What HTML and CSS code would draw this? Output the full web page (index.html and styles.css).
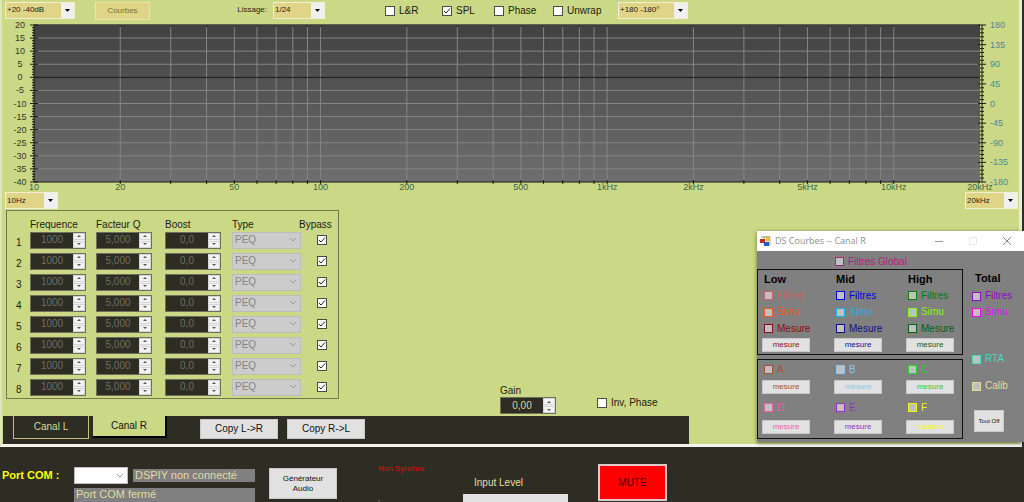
FILE: index.html
```html
<!DOCTYPE html>
<html lang="fr">
<head>
<meta charset="utf-8">
<meta name="viewport" content="width=device-width, initial-scale=1">
<title>DSPIY</title>
<link rel="stylesheet" href="styles.css">
</head>
<body>
<main class="workspace">
  <div class="toolbar">
    <select class="combo combo-wide" aria-label="Plage SPL"><option>+20 -40dB</option></select>
    <button class="curves-btn" type="button">Courbes</button>
    <label class="smoothing">Lissage:
      <select class="combo combo-mid"><option>1/24</option></select>
    </label>
    <div class="view-options">
      <label class="check opt-lr"><input type="checkbox">L&amp;R</label>
      <label class="check opt-spl"><input type="checkbox" checked>SPL</label>
      <label class="check opt-phase"><input type="checkbox">Phase</label>
      <label class="check opt-unwrap"><input type="checkbox">Unwrap</label>
    </div>
    <select class="combo combo-wide" aria-label="Plage phase"><option>+180 -180°</option></select>
  </div>

  <div class="chart"><svg id="plot" class="plot" role="img" aria-label="Réponse en fréquence"></svg></div>

  <div class="range">
    <select class="combo" aria-label="Fréquence min"><option>10Hz</option></select>
    <select class="combo" aria-label="Fréquence max"><option>20kHz</option></select>
  </div>

  <div class="channel">
    <section class="eq" id="eq">
      <div class="eq-row eq-head"><span></span><span>Frequence</span><span>Facteur Q</span><span>Boost</span><span>Type</span><span class="bypass-title">Bypass</span></div>
    </section>
    <div class="output">
      <div class="gain">
        <label for="gain">Gain</label>
        <div class="spin spin-live"><input id="gain" type="text" value="0,00"><div class="steps"><button type="button" class="up" aria-label="Plus"></button><button type="button" class="down" aria-label="Moins"></button></div></div>
      </div>
      <label class="check invert"><input type="checkbox">Inv, Phase</label>
    </div>
  </div>

  <div class="tabs">
    <button type="button" class="tab">Canal L</button>
    <button type="button" class="tab tab-active">Canal R</button>
    <button type="button" class="plain copy">Copy L-&gt;R</button>
    <button type="button" class="plain copy">Copy R-&gt;L</button>
  </div>
</main>

<footer class="footer">
  <label class="port-label" for="port">Port COM :</label>
  <div class="port">
    <select id="port" class="port-select"><option></option></select>
    <output class="status">DSPIY non connecté</output>
    <output class="status status-full">Port COM fermé</output>
  </div>
  <button type="button" class="plain generator">Générateur<br>Audio</button>
  <div class="sync"><span>Non Synchro</span><span class="dot">.</span></div>
  <div class="level"><span>Input Level</span><div class="level-bar"></div></div>
  <button type="button" class="mute">MUTE</button>
</footer>

<aside class="window">
  <header class="titlebar">
    <svg class="app-icon" viewBox="0 0 11 11" aria-hidden="true">
      <rect x="1" y="0" width="9" height="2" fill="#c9c9c9"/><rect x="4" y="1" width="6" height="8" fill="#e4e4e4" stroke="#888" stroke-width=".6"/>
      <rect x="0" y="3" width="5" height="4" fill="#c82c22"/><rect x="6" y="1" width="4" height="4" fill="#f0bd28"/><rect x="4" y="6" width="5" height="4" fill="#245fc4"/>
    </svg>
    <span class="title">DS Courbes -- Canal R</span>
    <button type="button" aria-label="Réduire"><svg viewBox="0 0 10 10"><path d="M1 5.500h8" stroke="#999"/></svg></button>
    <button type="button" aria-label="Agrandir"><svg viewBox="0 0 10 10"><path d="M1.500 1.500h7v7h-7z" stroke="#e6e6e6"/></svg></button>
    <button type="button" aria-label="Fermer"><svg viewBox="0 0 10 10"><path d="M1 1l8 8M9 1l-8 8" stroke="#888"/></svg></button>
  </header>
  <div class="window-body">
    <label class="check tint global magenta"><input type="checkbox">Filtres Global</label>
    <div class="groups">
      <div class="group bands">
        <h2>Low</h2><h2>Mid</h2><h2>High</h2>
        <label class="check tint coral"><input type="checkbox">Filtres</label>
        <label class="check tint blue"><input type="checkbox">Filtres</label>
        <label class="check tint green"><input type="checkbox">Filtres</label>
        <label class="check tint orange"><input type="checkbox">Simu</label>
        <label class="check tint cyan"><input type="checkbox">Simu</label>
        <label class="check tint lawn"><input type="checkbox">Simu</label>
        <label class="check tint maroon"><input type="checkbox">Mesure</label>
        <label class="check tint navy"><input type="checkbox">Mesure</label>
        <label class="check tint forest"><input type="checkbox">Mesure</label>
        <button type="button" class="plain measure maroon">mesure</button>
        <button type="button" class="plain measure navy">mesure</button>
        <button type="button" class="plain measure forest">mesure</button>
      </div>
      <div class="group slots">
        <label class="check tint sienna"><input type="checkbox">A</label>
        <label class="check tint sky"><input type="checkbox">B</label>
        <label class="check tint lime"><input type="checkbox">C</label>
        <button type="button" class="plain measure sienna">mesure</button>
        <button type="button" class="plain measure sky">mesure</button>
        <button type="button" class="plain measure lime">mesure</button>
        <label class="check tint pink"><input type="checkbox">D</label>
        <label class="check tint purple"><input type="checkbox">E</label>
        <label class="check tint yellow"><input type="checkbox">F</label>
        <button type="button" class="plain measure pink">mesure</button>
        <button type="button" class="plain measure purple">mesure</button>
        <button type="button" class="plain measure yellow">mesure</button>
      </div>
    </div>
    <div class="totals">
      <h2>Total</h2>
      <label class="check tint violet"><input type="checkbox">Filtres</label>
      <label class="check tint fuchsia"><input type="checkbox">Simu</label>
      <label class="check tint turquoise rta"><input type="checkbox">RTA</label>
      <label class="check tint khaki calib"><input type="checkbox">Calib</label>
      <button type="button" class="plain all-off">Tout Off</button>
    </div>
  </div>
</aside>
<script src="app.js"></script>
</body>
</html>
```
FILE: styles.css
```css
:root {
  --lime: #cbd885;
  --dark: #2d2d23;
  --sand: #e0d486;
  --face: #e1e1e1;
}
* { box-sizing: border-box; }
body {
  margin: 0;
  min-height: 100vh;
  position: relative;
  overflow: hidden;
  display: flex;
  flex-direction: column;
  background: var(--dark);
  color: #1c1c14;
  font: 10px/12px "Liberation Sans", Arial, sans-serif;
}
button, input, select { font: inherit; color: inherit; margin: 0; padding: 0; border-radius: 0; }
h2 { margin: 0; font-size: 11px; line-height: 12px; color: #000; }

.workspace {
  margin-right: 2px;
  border-right: 3px solid #e9ebe2;
  border-bottom: 3px solid #f4f5ee;
  border-left: 2px solid #dfe5bd;
  background: var(--lime);
}

/* shared controls */
.combo {
  appearance: none;
  height: 17px;
  width: 53px;
  padding: 0 13px 0 1px;
  border: 1px solid #f3efd2;
  font-size: 8px;
  background:
    url("data:image/svg+xml,%3Csvg xmlns='http://www.w3.org/2000/svg' width='13' height='15'%3E%3Cpath d='M0 0h13v15H0z' fill='%23f0f0f0'/%3E%3Cpath d='M4 6h5L6.500 9z'/%3E%3C/svg%3E") right center no-repeat,
    var(--sand);
}
.combo-wide { width: 70px; }
.combo-mid { width: 52px; }
.plain { border: 1px solid #c9c9c9; background: var(--face); color: #111; }
.check { display: flex; align-items: center; gap: 4px; white-space: nowrap; }
.check input, .bypass {
  appearance: none;
  flex: none;
  width: 10px;
  height: 10px;
  border: 1px solid #4b4b43;
  background: #fff;
}
.check input:checked, .bypass:checked {
  background: #fff url("data:image/svg+xml,%3Csvg xmlns='http://www.w3.org/2000/svg' viewBox='0 0 8 8'%3E%3Cpath d='M1 4l2 2 4-4.500' fill='none' stroke='%23222'/%3E%3C/svg%3E");
}

.toolbar { display: flex; align-items: center; height: 25px; padding: 0 0 5px 3px; }
.curves-btn {
  width: 55px;
  height: 18px;
  margin: 2px 0 0 20px;
  border: 1px solid #efe5a8;
  background: var(--sand);
  color: #77713c;
  font-size: 8px;
}
.smoothing { display: flex; align-items: center; justify-content: flex-end; gap: 6px; width: 175px; font-size: 8px; }
.view-options { display: flex; margin: 2px 0 0 60px; }
.opt-lr { width: 57px; }
.opt-spl { width: 52px; }
.opt-phase { width: 59px; }
.opt-unwrap { width: 65px; }

.chart { height: 167px; padding: 0 39px 0 32px; }
.plot { display: block; width: 100%; height: 157px; overflow: visible; font-size: 9px; }
.plot .grid { stroke: #858585; }
.plot .axis { stroke: #1b1b18; }
.plot .y-label { fill: #333a24; text-anchor: middle; }
.plot .x-label { fill: #3d6546; text-anchor: middle; }
.plot .phase-label { fill: #4b889a; }

.range { display: flex; justify-content: space-between; padding: 0 1px 0 3px; }
.range .combo { margin-bottom: 1px; }

.channel { display: flex; padding-left: 4px; }
.eq { width: 333px; height: 189px; border: 1px solid #737a4e; padding-top: 8px; }
.eq-row {
  display: grid;
  grid-template-columns: 14px 66px 69px 67px 85px 1fr;
  align-items: center;
  height: 17px;
  margin-bottom: 4px;
  padding-left: 9px;
}
.eq-head { height: 12px; margin: 0; }
.eq-row .number { padding-top: 6px; }
.bypass-title { margin-left: -18px; }
.spin {
  display: flex;
  width: 56px;
  height: 17px;
  border: 1px solid #6d6f5c;
  background: var(--dark);
}
.spin input { width: 0; flex: 1; border: 0; background: none; color: #6e6e67; text-align: center; }
.spin-live input { color: #d9d49b; }
.steps { display: flex; flex-direction: column; width: 12px; background: #f0f0f0; gap: 1px; }
.steps button { flex: 1; border: 1px solid #d5d5d5; background: #f3f3f3; display: grid; place-items: center; min-height: 0; }
.steps button::before { content: ""; border: 2px solid transparent; }
.steps .up::before { border-top: 0; border-bottom-color: #555; }
.steps .down::before { border-bottom: 0; border-top-color: #555; }
.type, .port-select {
  appearance: none;
  width: 69px;
  height: 17px;
  padding-left: 2px;
  border: 1px solid #bcbcbc;
  color: #858585;
  opacity: 1;
  background: #ccc url("data:image/svg+xml,%3Csvg xmlns='http://www.w3.org/2000/svg' width='12' height='8'%3E%3Cpath d='M2 2l3 3 3-3' fill='none' stroke='%23999'/%3E%3C/svg%3E") right center no-repeat;
}
.output { display: flex; align-items: flex-start; gap: 41px; padding: 175px 0 0 161px; }
.gain { display: flex; flex-direction: column; }
.invert { margin-top: 12px; }

.tabs {
  display: flex;
  align-items: flex-start;
  width: 686px;
  max-width: 100%;
  height: 28px;
  margin: 2px 0 0 1px;
  padding-left: 10px;
  background: var(--dark);
}
.tab { width: 76px; height: 23px; border: 1px solid #c9bc7c; border-top: 0; background: none; color: #dcd69b; }
.tab-active { width: 74px; height: 22px; margin: 0 33px 0 4px; border: 0 solid #000; border-width: 0 2px 2px 0; background: var(--lime); color: #15150f; }
.copy { width: 78px; height: 20px; margin: 3px 9px 0 0; }

.footer { display: flex; align-items: flex-start; flex: 1; height: 55px; padding: 17px 0 0 2px; color: #e5dfa5; }
.port-label { width: 72px; margin-top: 5px; font-size: 11px; font-weight: bold; color: #ff0; }
.port { display: grid; grid-template-columns: 54px 122px; gap: 4px 5px; align-items: center; margin-top: 3px; font-size: 11px; }
.port-select { width: 54px; background-color: #fff; }
.status { display: block; height: 13px; padding-left: 2px; line-height: 13px; background: #808080; color: #e0d9a0; }
.status-full { grid-column: 1 / -1; height: 14px; }
.generator { width: 68px; height: 31px; margin: 4px 0 0 14px; font-size: 8px; line-height: 10px; }
.sync { display: flex; flex-direction: column; gap: 20px; width: 85px; margin: 0 0 0 41px; font-size: 8px; line-height: 10px; white-space: nowrap; color: #e00d0d; }
.dot { color: #e5dfa5; }
.level { width: 105px; margin-top: 13px; }
.level span { display: block; padding-left: 11px; }
.level-bar { height: 10px; margin-top: 5px; background: var(--face); }
.mute { width: 69px; height: 37px; margin-left: 30px; border: 2px solid #e3c9c9; background: #f00; color: #400; }

/* floating curve selector, over the workspace */
.window {
  position: absolute;
  top: 231px;
  right: 0;
  width: 267px;
  background: #808080;
  box-shadow: 0 1px 4px #0008;
}
.titlebar { display: flex; align-items: center; height: 20px; padding-left: 3px; background: #fff; font: 9px/12px "Open Sans", sans-serif; color: #8f8f8f; }
.app-icon { width: 11px; height: 11px; }
.title { flex: 1; margin-left: 4px; }
.titlebar button { width: 34px; height: 20px; border: 0; background: none; display: grid; place-items: center; }
.titlebar button svg { width: 10px; height: 10px; fill: none; }
.window-body { display: grid; grid-template-columns: 206px 1fr; padding-bottom: 3px; }
.global { grid-column: 1 / -1; height: 18px; padding: 3px 0 0 78px; }
.groups { display: grid; gap: 4px; }
.group {
  display: grid;
  grid-template-columns: 72px 72px 1fr;
  align-content: start;
  align-items: center;
  padding-left: 6px;
  border: 1px solid #111;
}
.bands { height: 86px; grid-template-rows: 17px 17px 16px 17px 15px; }
.slots { height: 80px; grid-template-rows: 19px 15px 27px 11px; }
.tint input { width: 9px; height: 9px; border-color: currentColor; background: #c0c0c0; }
.bands .measure, .slots .measure { width: 48px; height: 14px; margin-left: -2px; font-size: 8px; line-height: 10px; }
.measure.maroon { color: #8b0c12; }
.totals { display: flex; flex-direction: column; padding-left: 9px; }
.totals h2 { margin: 3px 0 4px 3px; }
.totals .check { height: 16px; }
.totals .rta { margin-top: 31px; }
.totals .calib { margin-top: 11px; }
.all-off { width: 30px; height: 22px; margin: 16px 0 0 2px; font-size: 6px; line-height: 8px; white-space: nowrap; }

.magenta { color: #b5207b; }
.coral { color: #c56460; }
.blue { color: #00d; }
.green { color: #087a18; }
.orange { color: #f0522a; }
.cyan { color: #20b4dc; }
.lawn { color: #8cf020; }
.maroon { color: #8b0c12; }
.navy { color: #10108b; }
.forest { color: #085f10; }
.sienna { color: #a0523a; }
.sky { color: #8fc8ea; }
.lime { color: #32cd32; }
.pink { color: #ea62aa; }
.purple { color: #8b35c4; }
.yellow { color: #f5f518; }
.violet { color: #8c0bc8; }
.fuchsia { color: #e60be6; }
.turquoise { color: #48d8c0; }
.khaki { color: #e5df98; }
```
FILE: app.js
```javascript
const NS = "http://www.w3.org/2000/svg";
const plot = document.getElementById("plot");
const H = 157;
const MAX_HZ = 20000;
const MIN_HZ = 10;

function add(parent, name, attrs, text) {
  const node = document.createElementNS(NS, name);
  Object.entries(attrs).forEach(([k, v]) => node.setAttribute(k, v));
  if (text !== undefined) node.textContent = text;
  parent.appendChild(node);
  return node;
}
const xPos = hz => (Math.log(hz / MIN_HZ) / Math.log(MAX_HZ / MIN_HZ)) * 100 + "%";
const line = (cls, x1, y1, x2, y2, parent = plot) => add(parent, "line", { class: cls, x1, y1, x2, y2 });

const defs = add(plot, "defs", {});
const fade = add(defs, "linearGradient", { id: "fade", x1: 0, y1: 0, x2: 0, y2: 1 });
add(fade, "stop", { offset: 0, "stop-color": "#414141" });
add(fade, "stop", { offset: 1, "stop-color": "#6f6f6f" });
add(plot, "rect", { width: "100%", height: H, fill: "url(#fade)" });

// frequency grid: 1-2-...-9 in each decade
for (let decade = 10; decade <= 10000; decade *= 10) {
  for (let n = 1; n < 10 && n * decade <= MAX_HZ; n++) {
    const hz = n * decade;
    const x = xPos(hz);
    if (hz > MIN_HZ && hz < MAX_HZ) {
      line("grid", x, 0, x, H);
      line("axis", x, 0, x, 2);
      line("axis", x, H - 2, x, H + 2);
    }
    if ([1, 2, 5].includes(n)) {
      add(plot, "text", { class: "x-label", x, y: H + 8 }, hz < 1000 ? hz : hz / 1000 + "kHz");
    }
  }
}

// level axis
for (let db = 20; db >= -40; db--) {
  const y = ((20 - db) / 60) * H;
  const major = db % 5 === 0;
  if (major && Math.abs(db) !== 40) line(db === 0 ? "axis" : "grid", 0, y, "100%", y);
  line("axis", major ? -4 : -2, y, major ? 4 : 1, y);
  if (major) add(plot, "text", { class: "y-label", x: -14, y: y + 3 }, db);
}

// phase axis, anchored on the right edge
const right = add(plot, "svg", { x: "100%", width: 1, height: H, overflow: "visible" });
for (let deg = 180; deg >= -180; deg -= 9) {
  const y = ((180 - deg) / 360) * H;
  const major = deg % 45 === 0;
  line("axis", major ? -2 : 0, y, major ? 6 : 4, y, right);
  if (major) add(right, "text", { class: "phase-label", x: 10, y: y + 3 }, deg);
}
line("axis", 2, 0, 2, H, right);
line("axis", 0, 0, 0, H);
line("axis", 0, 0, "100%", 0);
line("axis", 0, H, "100%", H);

const spin = (label, value) => `<div class="spin"><input type="text" aria-label="${label}" value="${value}" disabled><div class="steps"><button type="button" class="up" aria-label="Plus" disabled></button><button type="button" class="down" aria-label="Moins" disabled></button></div></div>`;
const eq = document.getElementById("eq");
for (let i = 1; i <= 8; i++) {
  eq.insertAdjacentHTML("beforeend", `<div class="eq-row"><span class="number">${i}</span>${spin("Frequence " + i, "1000")}${spin("Facteur Q " + i, "5,000")}${spin("Boost " + i, "0,0")}<select class="type" aria-label="Type ${i}" disabled><option>PEQ</option></select><input class="bypass" type="checkbox" aria-label="Bypass ${i}" checked></div>`);
}
```
